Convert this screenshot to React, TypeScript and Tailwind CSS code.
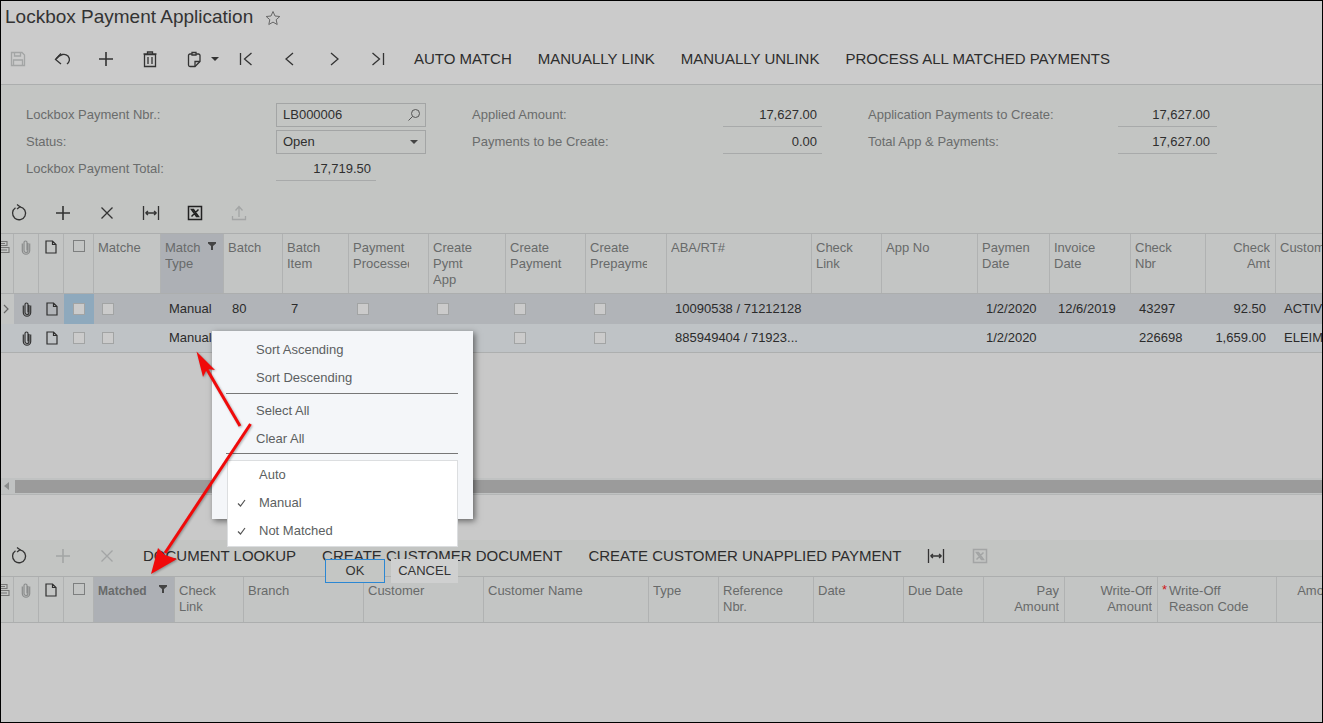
import type { ReactNode } from "react";

// small svg wrapper, every toolbar glyph is drawn on a 20x20 box
function Ico({ children, className = "text-[#333]" }: { children: ReactNode; className?: string }) {
  return (
    <svg width="20" height="20" viewBox="0 0 20 20" fill="none" stroke="currentColor" strokeWidth="1.3" className={className}>
      {children}
    </svg>
  );
}

const Save = () => (
  <Ico className="text-[#a3a5a5]">
    <path d="M3.500 3.500h10.500l2.500 2.500v10.500h-13z" />
    <path d="M6.500 3.500v3.500h6v-3.500M5.500 16.500v-5.500h9v5.500" />
  </Ico>
);
const Undo = () => (
  <Ico>
    <path d="M9 4.500L3.500 10.500L9 15" />
    <path d="M4 10C8 5 13 4 16 7C18.500 10 17.500 13 15 15" />
  </Ico>
);
const Plus = ({ className }: { className?: string }) => (
  <Ico className={className}>
    <path d="M10 3v14M3 10h14" strokeWidth="1.6" />
  </Ico>
);
const Trash = () => (
  <Ico>
    <path d="M4.500 5.500h11v12h-11zM3.500 5h13M7.500 5V3h5v2M8 8v7M12 8v7" />
  </Ico>
);
const Paste = () => (
  <Ico>
    <path d="M8 5H6a1.500 1.500 0 0 0-1.500 1.500V16a1.500 1.500 0 0 0 1.500 1.500H11l5-5V6.500A1.500 1.500 0 0 0 14.500 5H12" />
    <path d="M8 3.500h4v2.500H8zM16 12.500h-5v5" />
  </Ico>
);
const First = () => (
  <Ico>
    <path d="M4.500 4v12M15.500 4l-7 6 7 6" />
  </Ico>
);
const Prev = () => (
  <Ico>
    <path d="M13 4l-7 6 7 6" />
  </Ico>
);
const Next = () => (
  <Ico>
    <path d="M7 4l7 6-7 6" />
  </Ico>
);
const Last = () => (
  <Ico>
    <path d="M15.500 4v12M4.500 4l7 6-7 6" />
  </Ico>
);
const Refresh = () => (
  <Ico>
    <path d="M6.500 4.800a6.500 6.500 0 1 0 4.500-1" />
    <path d="M8 1.500l3 2.300-3 2.200" />
  </Ico>
);
const Cross = ({ className }: { className?: string }) => (
  <Ico className={className}>
    <path d="M4.500 4.500l11 11M15.500 4.500l-11 11" />
  </Ico>
);
const FitCols = ({ className }: { className?: string }) => (
  <Ico className={className}>
    <path d="M2.500 3v14M17.500 3v14M4.500 10h11M4.500 10l2.500-2M4.500 10l2.500 2M15.500 10l-2.500-2M15.500 10l-2.500 2" />
  </Ico>
);
const Excel = ({ className = "text-[#222]" }: { className?: string }) => (
  <Ico className={className}>
    <rect x="3.500" y="3.500" width="13" height="13" strokeWidth="1.5" />
    <path d="M6.500 6.500h2l5 7h-2zM13.500 6.500l-7 7" strokeWidth="1.500" />
  </Ico>
);
const Upload = () => (
  <Ico className="text-[#a3a5a5]">
    <path d="M10 14V4M6.500 7.500L10 3.500l3.500 4M3.500 13v3.500h13V13" />
  </Ico>
);
const Clip = ({ className = "text-[#333]" }: { className?: string }) => (
  <svg width="12" height="16" viewBox="0 0 12 16" fill="none" stroke="currentColor" strokeWidth="1.2" className={className}>
    <path d="M8 4v7.500a2 2 0 0 1-4 0V3.500a1.500 1.500 0 0 1 3 0v8" />
    <path d="M2.300 4.500v7a3.700 3.700 0 0 0 7.400 0v-7" />
  </svg>
);
const Doc = () => (
  <svg width="12" height="14" viewBox="0 0 12 14" fill="none" stroke="#2f2f2f" strokeWidth="1.2">
    <path d="M1 1h6.500L11 4.500V13H1zM7.500 1v3.500H11" />
  </svg>
);
const Funnel = () => (
  <svg width="8" height="8" viewBox="0 0 8 8" fill="#444">
    <path d="M0 0h8v1.500L5 4v4H3V4L0 1.500z" />
  </svg>
);
const ColsIcon = () => (
  <svg width="10" height="14" viewBox="0 0 10 14" fill="none" stroke="#777" strokeWidth="1.1" className="-ml-[1px]">
    <path d="M0 1.500h7v4H0M0 3.500h5M0 7.500h9v5H0M0 10h7" />
  </svg>
);

const Check = ({ big = false }: { big?: boolean }) => (
  <div className={big ? "h-[12px] w-[12px] border border-[#7d7f7f]" : "h-[12px] w-[12px] border border-[#a2a4a4] bg-[#cbcbcb]"} />
);

function IconBtn({ children, w = "w-[44px]" }: { children: ReactNode; w?: string }) {
  return <div className={`flex h-full shrink-0 items-center justify-center ${w}`}>{children}</div>;
}
const TextBtn = ({ label }: { label: string }) => (
  <div className="shrink-0 px-[13px] text-[15px] whitespace-nowrap text-[#2d2d2d]">{label}</div>
);

function Field({ label, value, lineW = "w-[99px]", labelW = "w-[251px]", pr = "pr-[5px]" }: { label: string; value: string; lineW?: string; labelW?: string; pr?: string }) {
  return (
    <div className="flex h-[24px] items-center">
      <div className={`${labelW} shrink-0 text-[#6a6c6c]`}>{label}</div>
      <div className={`${lineW} ${pr} flex h-[24px] items-center justify-end border-b border-[#a8aaaa] pt-[1px] text-[#2f2f2f]`}>{value}</div>
    </div>
  );
}

type Col = { w: string; lines: string[]; right?: boolean; sorted?: boolean; bold?: boolean; star?: boolean };

const topCols: Col[] = [
  { w: "w-[67px]", lines: ["Matched"] },
  { w: "w-[63px]", lines: ["Match", "Type"], sorted: true },
  { w: "w-[59px]", lines: ["Batch"] },
  { w: "w-[66px]", lines: ["Batch", "Item"] },
  { w: "w-[80px]", lines: ["Payment", "Processed"] },
  { w: "w-[77px]", lines: ["Create", "Pymt", "App"] },
  { w: "w-[80px]", lines: ["Create", "Payment"] },
  { w: "w-[81px]", lines: ["Create", "Prepayment"] },
  { w: "w-[145px]", lines: ["ABA/RT#"] },
  { w: "w-[70px]", lines: ["Check", "Link"] },
  { w: "w-[96px]", lines: ["App No"] },
  { w: "w-[72px]", lines: ["Payment", "Date"] },
  { w: "w-[81px]", lines: ["Invoice", "Date"] },
  { w: "w-[75px]", lines: ["Check", "Nbr"] },
  { w: "w-[70px]", lines: ["Check", "Amt"], right: true },
  { w: "w-[90px]", lines: ["Customer"] },
];

const bottomCols: Col[] = [
  { w: "w-[81px]", lines: ["Matched"], sorted: true, bold: true },
  { w: "w-[69px]", lines: ["Check", "Link"] },
  { w: "w-[120px]", lines: ["Branch"] },
  { w: "w-[120px]", lines: ["Customer"] },
  { w: "w-[165px]", lines: ["Customer Name"] },
  { w: "w-[70px]", lines: ["Type"] },
  { w: "w-[95px]", lines: ["Reference", "Nbr."] },
  { w: "w-[90px]", lines: ["Date"] },
  { w: "w-[80px]", lines: ["Due Date"] },
  { w: "w-[81px]", lines: ["Pay", "Amount"], right: true },
  { w: "w-[93px]", lines: ["Write-Off", "Amount"], right: true },
  { w: "w-[119px]", lines: ["Write-Off", "Reason Code"], star: true },
  { w: "w-[71px]", lines: ["Amount"], right: true },
];

function HeaderCell({ col }: { col: Col }) {
  const side = col.right ? "pr-[5px] pl-[2px] text-right" : col.star ? "pr-[3px] pl-[11px]" : "pr-[19px] pl-[4px]";
  return (
    <div className={`${col.w} ${side} relative h-full shrink-0 border-r border-[#b0b2b2] pt-[6px] leading-[16px] ${col.sorted ? "bg-[#adb0b5]" : ""}`}>
      <div className={`overflow-hidden text-[#686a6a] ${col.bold ? "text-[12px] font-bold" : ""}`}>
        {col.lines.map((l) => (
          <div key={l} className="whitespace-nowrap">
            {l}
          </div>
        ))}
      </div>
      {col.star && <span className="absolute top-[5px] left-[4px] text-[#d01818]">*</span>}
      {col.sorted && (
        <div className="absolute top-[8px] right-[7px]">
          <Funnel />
        </div>
      )}
    </div>
  );
}

function GridHead({ cols, h }: { cols: Col[]; h: string }) {
  return (
    <div className={`flex ${h} shrink-0 items-stretch overflow-hidden border-y border-[#acaeae] bg-[#c3c5c4]`}>
      <div className="flex w-[13px] shrink-0 justify-start border-r border-[#b0b2b2] pt-[6px]">
        <ColsIcon />
      </div>
      <div className="flex w-[25px] shrink-0 justify-center border-r border-[#b0b2b2] pt-[5px]">
        <Clip className="text-[#8a8c8c]" />
      </div>
      <div className="flex w-[25px] shrink-0 justify-center border-r border-[#b0b2b2] pt-[6px]">
        <Doc />
      </div>
      <div className="flex w-[30px] shrink-0 justify-center border-r border-[#b0b2b2] pt-[6px]">
        <Check big />
      </div>
      {cols.map((c) => (
        <HeaderCell key={c.lines.join("-")} col={c} />
      ))}
    </div>
  );
}

// one data row of the top grid, columns use the same widths as its header
function Row({ active, rt, inv, nbr, amt, cust }: { active?: boolean; rt: string; inv: string; nbr: string; amt: string; cust: string }) {
  const cell = "shrink-0 overflow-hidden pl-[8px] whitespace-nowrap";
  return (
    <div className={`flex shrink-0 items-center text-[#2b2b2b] ${active ? "h-[30px] bg-[#b1b4b8]" : "h-[28px] bg-[#bfc3c6]"}`}>
      <div className={`flex h-full w-[13px] shrink-0 items-center justify-start ${active ? "bg-[#c3c5c4]" : ""}`}>
        {active && (
          <svg width="8" height="10" viewBox="0 0 8 10" fill="none" stroke="#666" strokeWidth="1.2" className="ml-[1px]">
            <path d="M2 1l4 4-4 4" />
          </svg>
        )}
      </div>
      <div className="flex w-[25px] shrink-0 justify-center">
        <Clip />
      </div>
      <div className="flex w-[25px] shrink-0 justify-center">
        <Doc />
      </div>
      <div className={`flex h-full w-[30px] shrink-0 items-center justify-center ${active ? "bg-[#8ea9bd]" : ""}`}>
        <Check />
      </div>
      <div className={`${cell} w-[67px]`}>
        <Check />
      </div>
      <div className={`${cell} w-[63px]`}>Manual</div>
      <div className={`${cell} w-[59px]`}>{active ? "80" : ""}</div>
      <div className={`${cell} w-[66px]`}>{active ? "7" : ""}</div>
      <div className={`${cell} w-[80px]`}>
        <Check />
      </div>
      <div className={`${cell} w-[77px]`}>
        <Check />
      </div>
      <div className={`${cell} w-[80px]`}>
        <Check />
      </div>
      <div className={`${cell} w-[81px]`}>
        <Check />
      </div>
      <div className={`${cell} w-[145px]`}>{rt}</div>
      <div className="w-[70px] shrink-0" />
      <div className="w-[96px] shrink-0" />
      <div className={`${cell} w-[72px]`}>1/2/2020</div>
      <div className={`${cell} w-[81px]`}>{inv}</div>
      <div className={`${cell} w-[75px]`}>{nbr}</div>
      <div className="w-[70px] shrink-0 pr-[10px] text-right">{amt}</div>
      <div className={`${cell} w-[48px]`}>{cust}</div>
    </div>
  );
}

export default function App() {
  return (
    <div className="relative flex h-[723px] w-[1323px] flex-col overflow-hidden border border-black bg-[#c9c9c9] font-['Liberation_Sans',Arial,sans-serif] text-[13px]">
      {/* title */}
      <div className="flex h-[35px] shrink-0 items-center bg-[#cbcbcb] pb-[2px] pl-[4px] text-[19px] text-[#333]">
        Lockbox Payment Application
        <svg width="16" height="16" viewBox="0 0 16 16" fill="none" stroke="#666" strokeWidth="1" className="ml-[12px]">
          <path d="M8 1.500l2 4.500 4.800.5-3.600 3.200 1 4.800L8 12.100 3.800 14.500l1-4.800L1.200 6.500 6 6z" />
        </svg>
      </div>

      {/* main toolbar */}
      <div className="flex h-[49px] shrink-0 items-center border-b border-[#acaeae] bg-[#cbcbcb] pb-[2px] -ml-[5px]">
        <IconBtn>
          <Save />
        </IconBtn>
        <IconBtn>
          <Undo />
        </IconBtn>
        <IconBtn>
          <Plus />
        </IconBtn>
        <IconBtn>
          <Trash />
        </IconBtn>
        <div className="flex h-full w-[52px] shrink-0 items-center pl-[12px]">
          <Paste />
          <svg width="8" height="4" viewBox="0 0 8 4" fill="#333" className="ml-[7px]">
            <path d="M0 0h8L4 4z" />
          </svg>
        </div>
        <IconBtn>
          <First />
        </IconBtn>
        <IconBtn>
          <Prev />
        </IconBtn>
        <IconBtn>
          <Next />
        </IconBtn>
        <IconBtn>
          <Last />
        </IconBtn>
        <div className="w-[1px] shrink-0" />
        <TextBtn label="AUTO MATCH" />
        <TextBtn label="MANUALLY LINK" />
        <TextBtn label="MANUALLY UNLINK" />
        <TextBtn label="PROCESS ALL MATCHED PAYMENTS" />
      </div>

      {/* form + grid toolbar */}
      <div className="flex h-[148px] shrink-0 flex-col bg-[#c3c5c3]">
        <div className="flex h-[112px] shrink-0 pt-[18px] pl-[25px]">
          <div className="flex w-[446px] shrink-0 flex-col gap-[3px]">
            <div className="flex h-[24px] items-center">
              <div className="w-[250px] shrink-0 text-[#6a6c6c]">Lockbox Payment Nbr.:</div>
              <div className="flex h-[24px] w-[150px] items-center justify-between border border-[#a3a5a5] pr-[4px] pl-[6px] text-[#2f2f2f]">
                LB000006
                <svg width="14" height="14" viewBox="0 0 14 14" fill="none" stroke="#555" strokeWidth="1">
                  <circle cx="8.500" cy="5.500" r="4" />
                  <path d="M5.500 8.500L1.500 12.500" />
                </svg>
              </div>
            </div>
            <div className="flex h-[24px] items-center">
              <div className="w-[250px] shrink-0 text-[#6a6c6c]">Status:</div>
              <div className="flex h-[24px] w-[150px] items-center justify-between border border-[#a3a5a5] pr-[7px] pl-[6px] text-[#2f2f2f]">
                Open
                <svg width="8" height="4" viewBox="0 0 8 4" fill="#444">
                  <path d="M0 0h8L4 4z" />
                </svg>
              </div>
            </div>
            <Field label="Lockbox Payment Total:" value="17,719.50" lineW="w-[100px]" labelW="w-[250px]" />
          </div>
          <div className="flex w-[396px] shrink-0 flex-col gap-[3px]">
            <Field label="Applied Amount:" value="17,627.00" />
            <Field label="Payments to be Create:" value="0.00" />
          </div>
          <div className="flex w-[350px] shrink-0 flex-col gap-[3px]">
            <Field label="Application Payments to Create:" value="17,627.00" labelW="w-[250px]" pr="pr-[7px]" />
            <Field label="Total App & Payments:" value="17,627.00" labelW="w-[250px]" pr="pr-[7px]" />
          </div>
        </div>
        <div className="flex h-[32px] shrink-0 items-center -ml-[4px]">
          <IconBtn>
            <Refresh />
          </IconBtn>
          <IconBtn>
            <Plus />
          </IconBtn>
          <IconBtn>
            <Cross />
          </IconBtn>
          <IconBtn>
            <FitCols />
          </IconBtn>
          <IconBtn>
            <Excel />
          </IconBtn>
          <IconBtn>
            <Upload />
          </IconBtn>
        </div>
      </div>

      {/* top grid */}
      <GridHead cols={topCols} h="h-[61px]" />
      <Row active rt="10090538 / 71212128" inv="12/6/2019" nbr="43297" amt="92.50" cust="ACTIV" />
      <Row rt="885949404 / 71923..." inv="" nbr="226698" amt="1,659.00" cust="ELEIM" />
      <div className="h-[1px] shrink-0 bg-[#adafaf]" />
      <div className="h-[125px] shrink-0 bg-[#c8c8c8]" />
      <div className="flex h-[17px] shrink-0 items-center border-b border-[#b4b6b6] bg-[#c0c2c2]">
        <svg width="14" height="10" viewBox="0 0 14 10" fill="#8a8c8c" className="shrink-0">
          <path d="M8 1v8L3 5z" />
        </svg>
        <div className="h-[13px] flex-1 bg-[#9b9b9b]" />
      </div>
      <div className="h-[45px] shrink-0 bg-[#c9c9c9]" />

      {/* bottom toolbar */}
      <div className="flex h-[36px] shrink-0 items-center bg-[#c3c5c3] pb-[4px] -ml-[4px]">
        <IconBtn>
          <Refresh />
        </IconBtn>
        <IconBtn>
          <Plus className="text-[#a3a5a5]" />
        </IconBtn>
        <IconBtn>
          <Cross className="text-[#a3a5a5]" />
        </IconBtn>
        <div className="w-[1px] shrink-0" />
        <TextBtn label="DOCUMENT LOOKUP" />
        <TextBtn label="CREATE CUSTOMER DOCUMENT" />
        <TextBtn label="CREATE CUSTOMER UNAPPLIED PAYMENT" />
        <IconBtn>
          <FitCols />
        </IconBtn>
        <IconBtn>
          <Excel className="text-[#a3a5a5]" />
        </IconBtn>
      </div>
      <GridHead cols={bottomCols} h="h-[47px]" />
      <div className="min-h-0 flex-1 bg-[#c9c9c9]" />

      {/* filter menu sits over the grids */}
      <div className="absolute top-[330px] left-[211px] h-[188px] w-[261px] bg-[#f4f6f9] pt-[5px] pl-[14px] text-[#5c5f61] shadow-[2px_2px_6px_rgba(0,0,0,0.5)]">
        <div className="flex h-[28px] items-center pl-[30px]">Sort Ascending</div>
        <div className="flex h-[28px] items-center pl-[30px]">Sort Descending</div>
        <div className="my-[1px] h-[1px] w-[232px] bg-[#777]" />
        <div className="flex h-[28px] items-center pt-[3px] pl-[30px]">Select All</div>
        <div className="flex h-[30px] items-center pt-[1px] pl-[30px]">Clear All</div>
        <div className="h-[1px] w-[232px] bg-[#777]" />
      </div>
      <div className="absolute top-[459px] left-[226px] h-[87px] w-[231px] border border-[#dcdee0] bg-white text-[#5c5f61]">
        {["Auto", "Manual", "Not Matched"].map((t) => (
          <div key={t} className="flex h-[28px] items-center">
            <div className="flex w-[31px] shrink-0 justify-end pr-[13px]">
              {t !== "Auto" && (
                <svg width="9" height="8" viewBox="0 0 9 8" fill="none" stroke="#555" strokeWidth="1.2">
                  <path d="M1 4.500l2.500 2.500L8 1" />
                </svg>
              )}
            </div>
            {t}
          </div>
        ))}
      </div>
      <div className="absolute top-[558px] left-[324px] flex h-[24px] w-[60px] items-center justify-center border border-[#2b87d3] bg-[#c4c6c4] text-[#333]">
        OK
      </div>
      <div className="absolute top-[558px] left-[390px] flex h-[24px] w-[67px] items-center justify-center bg-[#cfd0d0] text-[#333]">
        CANCEL
      </div>

      {/* red annotation arrows */}
      <svg width="1323" height="723" viewBox="0 0 1323 723" className="pointer-events-none absolute -top-[1px] -left-[1px] drop-shadow-[1px_1px_1px_rgba(0,0,0,0.3)]">
        <path d="M240 426L205 366" stroke="#f00a0a" strokeWidth="3" />
        <path d="M196.500 351.500L215 370L207 369L203 377z" fill="#f00a0a" />
        <path d="M250.500 424L165 553" stroke="#f00a0a" strokeWidth="3" />
        <path d="M151 574L158 548L165 555L177 559z" fill="#f00a0a" />
      </svg>
    </div>
  );
}
